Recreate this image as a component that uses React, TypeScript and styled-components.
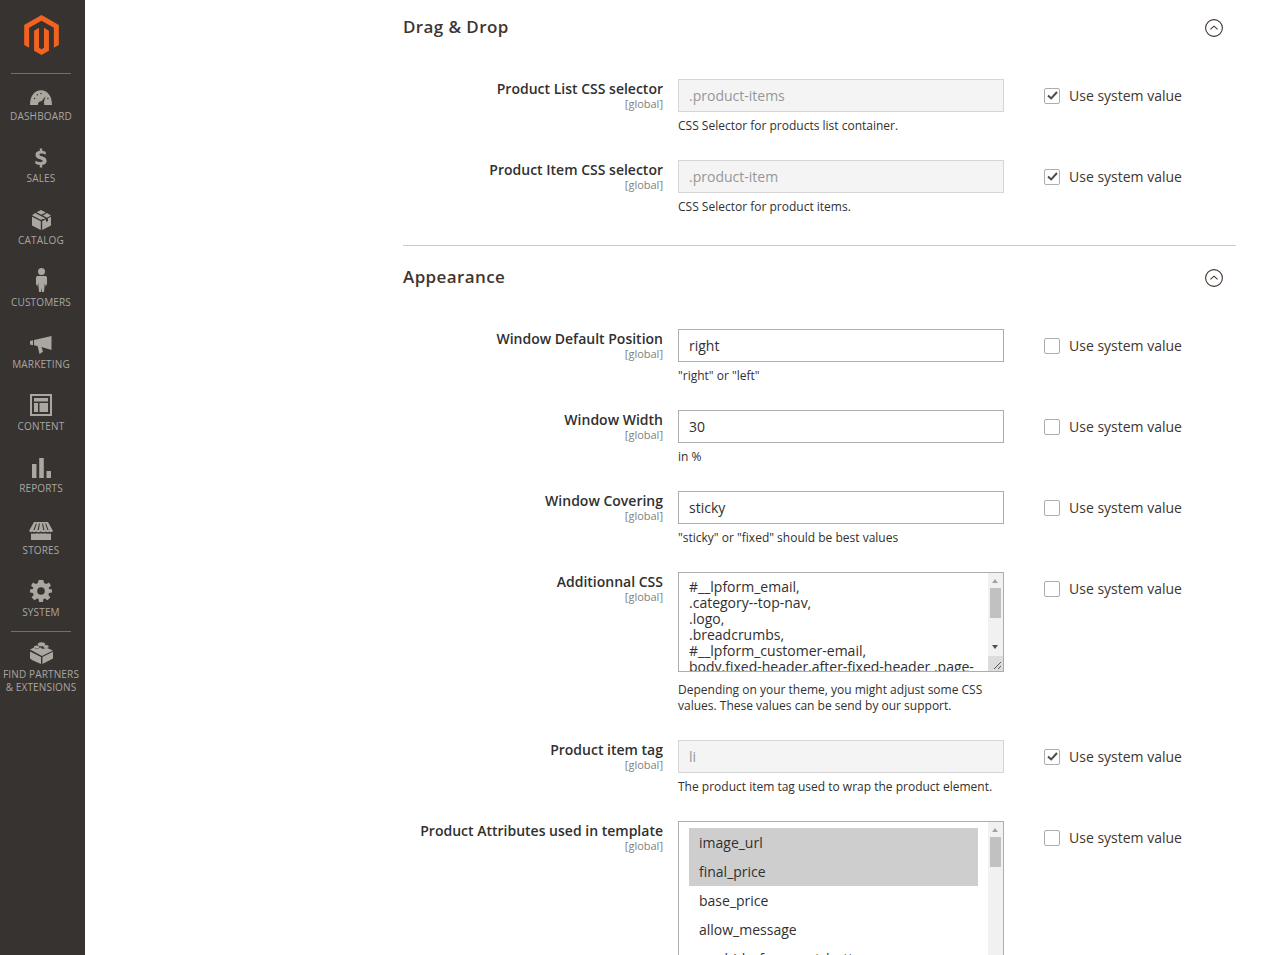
import React from "react";
import styled, { createGlobalStyle } from "styled-components";

const GlobalStyle = createGlobalStyle`
  html, body {
    margin: 0;
    padding: 0;
    height: 955px;
    overflow: hidden;
    background: #fff;
    font-family: "Open Sans", "Liberation Sans", sans-serif;
    color: #303030;
  }
`;

const Page = styled.div`
  display: flex;
  height: 955px;
  overflow: hidden;
`;

const Sidebar = styled.nav`
  flex: 0 0 85px;
  box-sizing: border-box;
  padding-right: 3px;
  background: #373330;
  display: flex;
  flex-direction: column;
  align-items: center;
`;

const LogoLink = styled.div`
  height: 73px;
  width: 100%;
  display: flex;
  justify-content: center;
  padding-top: 15px;
  box-sizing: border-box;
`;

const Divider = styled.div`
  width: 60px;
  height: 1px;
  flex: 0 0 1px;
  background: #736e69;
`;

const LowerDivider = styled(Divider)`
  margin-top: -1px;
`;

const MenuItem = styled.div`
  width: 100%;
  height: 62px;
  flex: 0 0 62px;
  display: flex;
  flex-direction: column;
  align-items: center;
  padding-top: 7px;
  box-sizing: border-box;
  color: #aaa6a0;
`;

const IconSlot = styled.div`
  height: 25px;
  flex: 0 0 25px;
  display: flex;
  align-items: flex-end;
  justify-content: center;
`;

const MenuLabel = styled.span`
  font-size: 10px;
  line-height: 13px;
  letter-spacing: 0.15px;
  margin-top: 4px;
  text-align: center;
  white-space: nowrap;
`;

const Main = styled.main`
  flex: 1;
  padding: 0 29px 0 318px;
  min-width: 0;
`;

const Section = styled.section<{ $top: number }>`
  padding-top: ${(p) => p.$top}px;
`;

const SectionHeader = styled.div`
  display: flex;
  align-items: center;
  justify-content: space-between;
  height: 24px;
  padding-right: 13px;
`;

const SectionTitle = styled.h2`
  margin: 0;
  padding-bottom: 2px;
  font-size: 17px;
  line-height: 22px;
  font-weight: 600;
  letter-spacing: 0.4px;
  color: #41362f;
`;

const SectionRule = styled.hr`
  border: 0;
  height: 1px;
  background: #cccccc;
  margin: 0;
`;

const Rows = styled.div<{ $top: number; $bottom: number }>`
  padding: ${(p) => p.$top}px 0 ${(p) => p.$bottom}px;
  display: flex;
  flex-direction: column;
  gap: 26px;
`;

const Row = styled.div`
  display: grid;
  grid-template-columns: 260px 326px 1fr;
  column-gap: 15px;
`;

const LabelCell = styled.div`
  text-align: right;
`;

const LabelText = styled.div`
  font-size: 14px;
  line-height: 19px;
  font-weight: 600;
  color: #303030;
  white-space: nowrap;
`;

const Scope = styled.div`
  font-size: 11px;
  line-height: 11px;
  color: #808080;
`;

const TextInput = styled.div<{ $disabled?: boolean }>`
  height: 33px;
  box-sizing: border-box;
  border: 1px solid ${(p) => (p.$disabled ? "#d6d6d6" : "#adadad")};
  background: ${(p) => (p.$disabled ? "#f4f4f4" : "#fff")};
  color: ${(p) => (p.$disabled ? "#979797" : "#303030")};
  font-size: 14px;
  line-height: 31px;
  padding: 0 10px;
`;

const Hint = styled.div<{ $gap?: number }>`
  font-size: 12px;
  line-height: 16px;
  margin-top: ${(p) => p.$gap ?? 6}px;
  color: #303030;
`;

const ScrollFrame = styled.div<{ $height: number }>`
  position: relative;
  height: ${(p) => p.$height}px;
  box-sizing: border-box;
  border: 1px solid #adadad;
  background: #fff;
  overflow: hidden;
`;

const CodeText = styled.div`
  font-size: 14px;
  line-height: 16px;
  padding: 6px 16px 0 10px;
  color: #303030;
`;

const Scrollbar = styled.div`
  position: absolute;
  top: 0;
  right: 0;
  bottom: 0;
  width: 15px;
  background: #f1f1f1;
`;

const Thumb = styled.div`
  position: absolute;
  top: 15px;
  left: 2px;
  width: 11px;
  height: 30px;
  background: #c1c1c1;
`;

const ArrowUp = styled.div`
  position: absolute;
  top: 6px;
  left: 4px;
  width: 0;
  height: 0;
  border-left: 3.5px solid transparent;
  border-right: 3.5px solid transparent;
  border-bottom: 4px solid #a3a3a3;
`;

const ArrowDown = styled.div`
  position: absolute;
  top: 72px;
  left: 4px;
  width: 0;
  height: 0;
  border-left: 3.5px solid transparent;
  border-right: 3.5px solid transparent;
  border-top: 4px solid #505050;
`;

const ResizeCorner = styled.svg`
  position: absolute;
  right: 0;
  bottom: 0;
  background: #dcdcdc;
`;

const OptionList = styled.div`
  padding: 6px 25px 0 10px;
`;

const Option = styled.div<{ $selected?: boolean }>`
  height: 29px;
  line-height: 29px;
  font-size: 14px;
  padding-left: 10px;
  color: #303030;
  background: ${(p) => (p.$selected ? "#cecece" : "transparent")};
`;

const InheritCell = styled.label`
  display: flex;
  align-items: center;
  height: 33px;
  padding-left: 25px;
  gap: 9px;
  font-size: 14px;
  color: #41362f;
`;

const CheckBox = styled.span`
  width: 16px;
  height: 16px;
  box-sizing: border-box;
  border: 1px solid #adadad;
  border-radius: 2px;
  background: #fff;
  display: flex;
  align-items: center;
  justify-content: center;
`;

const LogoMark = () => (
  <svg width="35" height="40" viewBox="1.6 0 20.8 24">
    <path
      fill="#f26322"
      d="M12 24l-4.455-2.572v-12l2.97-1.715v12.001l1.485.902 1.485-.902V7.713l2.971 1.715v12L12 24zM22.391 6v12l-2.969 1.714V7.713L12 3.43 4.574 7.713v12L1.609 18V6L12 0l10.391 6z"
    />
  </svg>
);

const icons: Record<string, React.ReactNode> = {
  DASHBOARD: (
    <svg width="22" height="16" viewBox="0 0 24 17" fill="currentColor">
      <path
        fillRule="evenodd"
        d="M0 16 C0 6 5 0 12 0 C19 0 24 6 24 16 H15.5 C15.6 15 15.4 14 15 13.4 L17 6.5 L12.6 12 C10.5 11.6 8.6 13.4 8.6 16 Z"
      />
      <circle cx="5" cy="9" r="0.8" fill="#373330" />
      <circle cx="8" cy="5" r="0.8" fill="#373330" />
      <circle cx="12" cy="3.5" r="0.8" fill="#373330" />
      <circle cx="19.5" cy="9" r="0.8" fill="#373330" />
    </svg>
  ),
  SALES: (
    <svg width="12" height="20" viewBox="0 0 14 22" fill="currentColor">
      <path d="M5.6 0 H8.4 V2.6 C10 2.8 11.4 3.2 12.6 3.9 V7.2 C11.2 6.4 9.6 5.8 7.8 5.8 C6.2 5.8 5.2 6.2 5.2 7.1 C5.2 8 6.4 8.4 8 9 C11 10 13.6 11.2 13.6 14.5 C13.6 17.2 11.6 18.8 8.4 19.2 V22 H5.6 V19.3 C3.6 19.1 1.8 18.6 0.5 17.8 V14.3 C2.2 15.3 4.4 16 6.2 16 C8 16 9 15.5 9 14.6 C9 13.7 7.8 13.2 6 12.6 C3 11.6 0.6 10.4 0.6 7.4 C0.6 4.8 2.4 3 5.6 2.6 Z" />
    </svg>
  ),
  CATALOG: (
    <svg width="19" height="20" viewBox="0 0 19 20" fill="currentColor">
      <path d="M9 0 L4.5 2.2 L9.4 4.8 L13.8 2.4 Z M15 3 L10.8 5.4 L15 7.8 L19 5.4 Z M3.2 3 L0 5.2 L8.6 9.8 L13.6 8.4 Z M0 6.8 V15.6 L8.8 20 V11.2 Z M19 6.8 V15.6 L10.2 20 V11.2 L14 9.2 V12 L16 11 V8.2 Z" />
    </svg>
  ),
  CUSTOMERS: (
    <svg width="11" height="24" viewBox="0 0 11 24" fill="currentColor">
      <circle cx="5.5" cy="3.6" r="3.5" />
      <path d="M1.6 8 H9.4 C10.4 8 11 8.8 11 10 V16 L9.6 18.5 L8.8 15 L8 24 H6 L5.5 20 L5 24 H3 L2.2 15 L1.4 18.5 L0 16 V10 C0 8.8 0.6 8 1.6 8 Z" />
    </svg>
  ),
  MARKETING: (
    <svg width="22" height="18" viewBox="0 0 22 18" fill="currentColor">
      <path d="M0 5 L3 4.2 V9.2 L0 8.4 Z M4 4 L21.5 0 V14 L11.5 11 L13 15.8 L9.5 18 L7.6 10 L4 9.2 Z" />
    </svg>
  ),
  CONTENT: (
    <svg width="22" height="22" viewBox="0 0 22 22" fill="currentColor">
      <path
        fillRule="evenodd"
        d="M0 0 H22 V22 H0 Z M2 2 V20 H20 V2 Z M4 4 H18 V7.5 H4 Z M4 9 H8 V18 H4 Z M9.5 9 H18 V18 H9.5 Z"
      />
    </svg>
  ),
  REPORTS: (
    <svg width="19" height="20" viewBox="0 0 19 20" fill="currentColor">
      <path d="M0 6 H4.5 V20 H0 Z M7.2 0 H11.8 V20 H7.2 Z M14.5 13 H19 V20 H14.5 Z" />
    </svg>
  ),
  STORES: (
    <svg width="24" height="18" viewBox="0 0 24 18" fill="currentColor">
      <path
        fillRule="evenodd"
        d="M5 0 H19 L24 9 C23 10.4 21.2 10.4 20.4 9.6 C19.4 10.6 17.6 10.6 16.7 9.6 C15.6 10.6 13.6 10.6 12 9.6 C10.4 10.6 8.4 10.6 7.3 9.6 C6.4 10.6 4.6 10.6 3.6 9.6 C2.8 10.4 1 10.4 0 9 Z M7 1.6 L4.4 8 H5.6 L7.9 1.6 Z M10 1.6 L8.6 8 H9.8 L10.9 1.6 Z M13.1 1.6 L14.2 8 H15.4 L14 1.6 Z M16.1 1.6 L18.4 8 H19.6 L17 1.6 Z"
      />
      <path d="M2 11.4 C3 11.8 4 11.6 4.5 11.4 C5.5 11.9 7 11.9 8 11.3 C9.4 11.9 10.6 11.9 12 11.3 C13.4 11.9 14.6 11.9 16 11.3 C17 11.9 18.5 11.9 19.5 11.4 C20 11.6 21 11.8 22 11.4 V18 H2 Z" />
    </svg>
  ),
  SYSTEM: (
    <svg width="22" height="22" viewBox="0 0 22 22" fill="currentColor">
      <path
        fillRule="evenodd"
        d="M8.6 0 H13.4 L14 3 L16.4 4 L19 2.4 L21 5.8 L18.8 7.6 L19 9 L22 9.6 V12.4 L19 13 L18.4 15 L20.4 17.4 L17.4 20.2 L15 18.4 L13.4 19 L13 22 H9 L8.6 19 L7 18.4 L4.6 20.2 L1.6 17.4 L3.6 15 L3 13 L0 12.4 V9.6 L3 9 L3.2 7.6 L1 5.8 L3 2.4 L5.6 4 L8 3 Z M11 7.2 A3.8 3.8 0 1 0 11 14.8 A3.8 3.8 0 1 0 11 7.2 Z"
      />
    </svg>
  ),
  PARTNERS: (
    <svg width="23" height="22" viewBox="0 0 23 22" fill="currentColor">
      <path d="M0 7.5 L4 5.6 C4.6 7 8 7.4 9 6 L10.8 5.2 C11 7 15.4 7.4 16 5.6 L23 8.4 L12 14 Z" />
      <ellipse cx="11.5" cy="2.2" rx="3.6" ry="2" />
      <ellipse cx="6.6" cy="5" rx="2.8" ry="1.5" />
      <ellipse cx="16" cy="4.6" rx="2.8" ry="1.5" />
      <path d="M0 9.4 L11 15 V22 L3 18.6 L0 16.4 Z M23 9.8 V16.4 L12.4 22 V15 Z" />
    </svg>
  ),
};

const menu = [
  "DASHBOARD",
  "SALES",
  "CATALOG",
  "CUSTOMERS",
  "MARKETING",
  "CONTENT",
  "REPORTS",
  "STORES",
  "SYSTEM",
];

const CollapseIcon = () => (
  <svg width="18" height="18" viewBox="0 0 18 18" fill="none">
    <circle cx="9" cy="9" r="8.4" stroke="#41362f" strokeWidth="1.1" />
    <path d="M5.4 10.4 L9 7.2 L12.6 10.4" stroke="#41362f" strokeWidth="1.1" />
  </svg>
);

const Inherit = ({ checked }: { checked?: boolean }) => (
  <InheritCell>
    <CheckBox>
      {checked ? (
        <svg width="11" height="9" viewBox="0 0 11 9" fill="none">
          <path d="M1 4.4 L4.2 7.4 L10 1" stroke="#514943" strokeWidth="2" />
        </svg>
      ) : null}
    </CheckBox>
    Use system value
  </InheritCell>
);

const Label = ({ text }: { text: string }) => (
  <LabelCell>
    <LabelText>{text}</LabelText>
    <Scope>[global]</Scope>
  </LabelCell>
);

const Field = ({
  label,
  value,
  hint,
  disabled,
}: {
  label: string;
  value: string;
  hint: string;
  disabled?: boolean;
}) => (
  <Row>
    <Label text={label} />
    <div>
      <TextInput $disabled={disabled}>{value}</TextInput>
      <Hint>{hint}</Hint>
    </div>
    <Inherit checked={disabled} />
  </Row>
);

const App = () => {
  return (
    <>
      <GlobalStyle />
      <Page>
        <Sidebar>
          <LogoLink>
            <LogoMark />
          </LogoLink>
          <Divider />
          {menu.map((label) => (
            <MenuItem key={label}>
              <IconSlot>{icons[label]}</IconSlot>
              <MenuLabel>{label}</MenuLabel>
            </MenuItem>
          ))}
          <LowerDivider />
          <MenuItem>
            <IconSlot>{icons.PARTNERS}</IconSlot>
            <MenuLabel>
              FIND PARTNERS
              <br />& EXTENSIONS
            </MenuLabel>
          </MenuItem>
        </Sidebar>
        <Main>
          <Section $top={16}>
            <SectionHeader>
              <SectionTitle>Drag &amp; Drop</SectionTitle>
              <CollapseIcon />
            </SectionHeader>
            <Rows $top={39} $bottom={30}>
              <Field
                disabled
                label="Product List CSS selector"
                value=".product-items"
                hint="CSS Selector for products list container."
              />
              <Field
                disabled
                label="Product Item CSS selector"
                value=".product-item"
                hint="CSS Selector for product items."
              />
            </Rows>
            <SectionRule />
          </Section>
          <Section $top={20}>
            <SectionHeader>
              <SectionTitle>Appearance</SectionTitle>
              <CollapseIcon />
            </SectionHeader>
            <Rows $top={39} $bottom={0}>
              <Field
                label="Window Default Position"
                value="right"
                hint={'"right" or "left"'}
              />
              <Field label="Window Width" value="30" hint="in %" />
              <Field
                label="Window Covering"
                value="sticky"
                hint={'"sticky" or "fixed" should be best values'}
              />
              <Row>
                <Label text="Additionnal CSS" />
                <div>
                  <ScrollFrame $height={100}>
                    <CodeText>
                      #__lpform_email,
                      <br />
                      .category--top-nav,
                      <br />
                      .logo,
                      <br />
                      .breadcrumbs,
                      <br />
                      #__lpform_customer-email,
                      <br />
                      body.fixed-header.after-fixed-header .page-
                    </CodeText>
                    <Scrollbar>
                      <ArrowUp />
                      <Thumb />
                      <ArrowDown />
                      <ResizeCorner width="15" height="15" viewBox="0 0 15 15">
                        <path
                          d="M13 6 L6 13 M13 10 L10 13"
                          stroke="#555"
                          strokeWidth="1"
                        />
                      </ResizeCorner>
                    </Scrollbar>
                  </ScrollFrame>
                  <Hint $gap={10}>
                    Depending on your theme, you might adjust some CSS values.
                    These values can be send by our support.
                  </Hint>
                </div>
                <Inherit />
              </Row>
              <Field
                disabled
                label="Product item tag"
                value="li"
                hint="The product item tag used to wrap the product element."
              />
              <Row>
                <Label text="Product Attributes used in template" />
                <div>
                  <ScrollFrame $height={200}>
                    <OptionList>
                      <Option $selected>image_url</Option>
                      <Option $selected>final_price</Option>
                      <Option>base_price</Option>
                      <Option>allow_message</Option>
                      <Option>wp_hide_for_guest_button</Option>
                    </OptionList>
                    <Scrollbar>
                      <ArrowUp />
                      <Thumb />
                    </Scrollbar>
                  </ScrollFrame>
                </div>
                <Inherit />
              </Row>
            </Rows>
          </Section>
        </Main>
      </Page>
    </>
  );
};

export default App;
